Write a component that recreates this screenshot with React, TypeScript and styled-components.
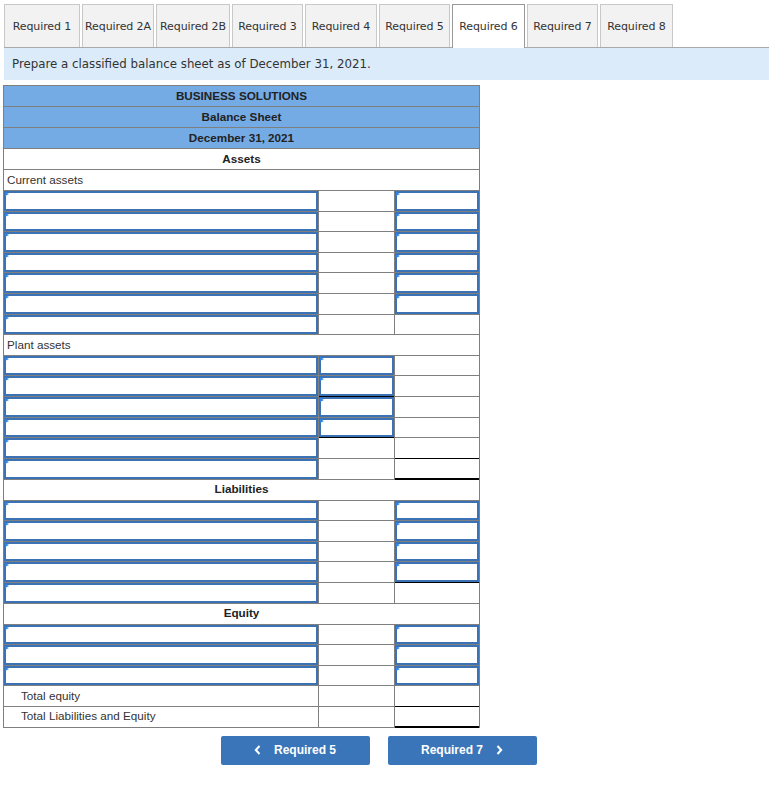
import React from "react";
import styled, { createGlobalStyle } from "styled-components";

const Global = createGlobalStyle`
  html, body { margin: 0; padding: 0; background: #fff; }
  body { font-family: "Liberation Sans", Arial, sans-serif; }
`;

const Page = styled.div`
  padding: 4px 0 20px 3px;
  width: 780px;
  box-sizing: border-box;
`;

const TabBar = styled.div`
  display: flex;
  gap: 2px;
  margin-left: 1px;
  width: 765px;
  height: 43px;
  border-bottom: 1px solid #a9a9a9;
`;

const Tab = styled.div<{ $active?: boolean; $w: number }>`
  width: ${(p) => p.$w}px;
  height: ${(p) => (p.$active ? "44px" : "43px")};
  box-sizing: border-box;
  display: flex;
  align-items: center;
  justify-content: center;
  font-family: "DejaVu Sans", Verdana, sans-serif;
  font-size: 11px;
  color: #333;
  background: ${(p) => (p.$active ? "#fff" : "#f2f2f2")};
  border: 1px solid ${(p) => (p.$active ? "#999" : "#c8c8c8")};
  border-bottom: none;
  white-space: nowrap;
  letter-spacing: -0.1px;
`;

const Instruction = styled.div`
  margin-left: 1px;
  width: 765px;
  height: 32px;
  box-sizing: border-box;
  background: #dbebf9;
  padding: 0 8px;
  display: flex;
  align-items: center;
  font-family: "DejaVu Sans", Verdana, sans-serif;
  font-size: 11.8px;
  color: #333;
`;

const Sheet = styled.div`
  margin-top: 5px;
  display: grid;
  grid-template-columns: 314px 75px 84px;
  gap: 1px;
  padding: 1px;
  width: max-content;
  background: #7f7f7f;
  font-family: "Liberation Sans", Arial, sans-serif;
  font-size: 11.7px;
  color: #333;
`;

const Banner = styled.div<{ $blue?: boolean }>`
  grid-column: 1 / -1;
  height: 20px;
  box-sizing: border-box;
  padding-bottom: 2px;
  background: ${(p) => (p.$blue ? "#75abe4" : "#fff")};
  display: flex;
  align-items: center;
  justify-content: center;
  font-weight: bold;
  color: #222;
`;

const GroupLabel = styled.div<{ $tall?: boolean }>`
  grid-column: 1 / -1;
  height: ${(p) => (p.$tall ? "20px" : "19.62px")};
  box-sizing: border-box;
  padding: 0 0 2px 3px;
  background: #fff;
  display: flex;
  align-items: center;
  color: #333;
`;

const TotalLabel = styled.div`
  height: 19.62px;
  box-sizing: border-box;
  padding: 0 0 2px 17px;
  background: #fff;
  display: flex;
  align-items: center;
  color: #333;
  white-space: nowrap;
`;

type Under = "single" | "double" | undefined;

const Entry = styled.div<{ $under?: Under }>`
  height: 19.62px;
  background: #fff;
  display: flex;
  box-shadow: ${(p) =>
    p.$under === "single"
      ? "0 1px 0 #000"
      : p.$under === "double"
      ? "inset 0 -1px 0 #000, 0 1px 0 #000"
      : "none"};
  position: relative;
  z-index: ${(p) => (p.$under ? 1 : 0)};
`;

const InputBox = styled.div`
  flex: 1;
  position: relative;
  box-sizing: border-box;
  border: 2px solid #3b71b5;
  background: #fff;
  &::before {
    content: "";
    position: absolute;
    z-index: 2;
    left: -1px;
    top: -1px;
    width: 0;
    height: 0;
    border-top: 2px solid transparent;
    border-bottom: 2px solid transparent;
    border-left: 4px solid #2e86e8;
  }
`;

const ButtonRow = styled.div`
  width: 751px;
  display: flex;
  justify-content: center;
  gap: 18px;
  margin-top: 8px;
`;

const NavButton = styled.button`
  width: 149px;
  height: 29px;
  border: none;
  border-radius: 2px;
  background: #3a75ba;
  color: #fff;
  font-family: "Liberation Sans", Arial, sans-serif;
  font-weight: bold;
  font-size: 12px;
  display: flex;
  align-items: center;
  justify-content: center;
  gap: 13px;
  padding: 0;
  cursor: pointer;
`;

const Chevron = ({ dir }: { dir: "left" | "right" }) => (
  <svg width="7" height="10" viewBox="0 0 7 10">
    <path
      d={dir === "left" ? "M5.5 1 L1.8 5 L5.5 9" : "M1.5 1 L5.2 5 L1.5 9"}
      fill="none"
      stroke="#fff"
      strokeWidth="2"
    />
  </svg>
);

type RowSpec = [boolean, boolean, Under?, Under?];

const InputRow = ({ spec }: { spec: RowSpec }) => {
  const [b, c, bu, cu] = spec;
  return (
    <>
      <Entry>
        <InputBox />
      </Entry>
      <Entry $under={bu}>{b && <InputBox />}</Entry>
      <Entry $under={cu}>{c && <InputBox />}</Entry>
    </>
  );
};

const current: RowSpec[] = [
  [false, true],
  [false, true],
  [false, true],
  [false, true],
  [false, true],
  [false, true],
  [false, false],
];
const plant: RowSpec[] = [
  [true, false],
  [true, false, "single"],
  [true, false],
  [true, false, "single"],
  [false, false, undefined, "single"],
  [false, false, undefined, "double"],
];
const liabilities: RowSpec[] = [
  [false, true],
  [false, true],
  [false, true],
  [false, true, undefined, "single"],
  [false, false],
];
const equity: RowSpec[] = [
  [false, true],
  [false, true],
  [false, true],
];

const tabs: [string, number][] = [
  ["Required 1", 76],
  ["Required 2A", 72],
  ["Required 2B", 74],
  ["Required 3", 71],
  ["Required 4", 72],
  ["Required 5", 71],
  ["Required 6", 73],
  ["Required 7", 71],
  ["Required 8", 73],
];

export default function App() {
  return (
    <>
      <Global />
      <Page>
        <TabBar>
          {tabs.map(([t, w]) => (
            <Tab key={t} $w={w} $active={t === "Required 6"}>
              {t}
            </Tab>
          ))}
        </TabBar>
        <Instruction>Prepare a classified balance sheet as of December 31, 2021.</Instruction>
        <Sheet>
          <Banner $blue>BUSINESS SOLUTIONS</Banner>
          <Banner $blue>Balance Sheet</Banner>
          <Banner $blue>December 31, 2021</Banner>
          <Banner>Assets</Banner>
          <GroupLabel $tall>Current assets</GroupLabel>
          {current.map((s, i) => (
            <InputRow key={"c" + i} spec={s} />
          ))}
          <GroupLabel>Plant assets</GroupLabel>
          {plant.map((s, i) => (
            <InputRow key={"p" + i} spec={s} />
          ))}
          <Banner>Liabilities</Banner>
          {liabilities.map((s, i) => (
            <InputRow key={"l" + i} spec={s} />
          ))}
          <Banner>Equity</Banner>
          {equity.map((s, i) => (
            <InputRow key={"e" + i} spec={s} />
          ))}
          <TotalLabel>Total equity</TotalLabel>
          <Entry />
          <Entry $under="single" />
          <TotalLabel>Total Liabilities and Equity</TotalLabel>
          <Entry />
          <Entry $under="double" />
        </Sheet>
        <ButtonRow>
          <NavButton>
            <Chevron dir="left" />
            Required 5
          </NavButton>
          <NavButton>
            Required 7
            <Chevron dir="right" />
          </NavButton>
        </ButtonRow>
      </Page>
    </>
  );
}
